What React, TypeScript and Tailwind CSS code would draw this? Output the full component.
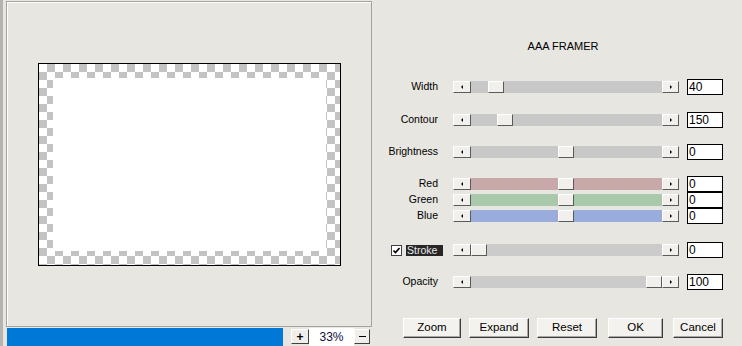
import React from 'react'

const raised =
  'border border-t-white border-l-white border-r-[#5a5a5a] border-b-[#5a5a5a] bg-[#f1f0ec]'

function ArrowButton({ dir }: { dir: 'left' | 'right' }) {
  return (
    <div className={`${raised} h-full flex items-center justify-center shrink-0 ${dir === 'left' ? 'w-[18px]' : 'w-[17px]'}`}>
      {dir === 'left' ? (
        <div className="w-0 h-0 border-y-[2px] border-y-transparent border-r-[2px] border-r-black" />
      ) : (
        <div className="w-0 h-0 border-y-[2px] border-y-transparent border-l-[2px] border-l-black" />
      )}
    </div>
  )
}

function Slider({ pos, track }: { pos: number; track: string }) {
  return (
    <div className="flex w-[226px] h-[12px] shrink-0">
      <ArrowButton dir="left" />
      <div className={`relative flex-1 h-full ${track}`}>
        <div className={`absolute top-0 h-full w-[16px] ${raised}`} style={{ left: pos }} />
      </div>
      <ArrowButton dir="right" />
    </div>
  )
}

function ValueBox({ value }: { value: string }) {
  return (
    <div className="ml-[8px] w-[36px] h-[16px] bg-white border border-black text-[12px] leading-[14px] pl-[1px] text-black shrink-0">
      {value}
    </div>
  )
}

function Row({ label, pos, value, track = 'bg-[#c8c8c8]', className = '' }: { label: string; pos: number; value: string; track?: string; className?: string }) {
  return (
    <div className={`flex items-center h-[16px] ${className}`}>
      <div className="w-[58px] text-right text-[10.5px] shrink-0">{label}</div>
      <div className="ml-[15px]">
        <Slider pos={pos} track={track} />
      </div>
      <ValueBox value={value} />
    </div>
  )
}

function Button({ label, w, className = '' }: { label: string; w: string; className?: string }) {
  return (
    <div className={`${w} h-[20px] flex items-center justify-center text-[11.5px] border border-t-white border-l-white border-r-[#3c3c3c] border-b-[#3c3c3c] bg-[#f3f2ee] shadow-[inset_-1px_-1px_0_#a8a8a8] ${className}`}>
      {label}
    </div>
  )
}

export default function App() {
  return (
    <div className="w-[742px] h-[346px] bg-[#e7e6e0] flex overflow-hidden text-[11px] text-black font-['Liberation_Sans',Arial,sans-serif]">
      {/* left edge */}
      <div className="w-[3px] h-full bg-[#b4b4b0] shrink-0" />

      {/* preview column */}
      <div className="ml-[3px] w-[366px] flex flex-col shrink-0">
        <div className="mt-[1px] h-[326px] border border-[#a3a3a0] shadow-[inset_1px_1px_0_#fff] flex items-center justify-center">
          <div className="w-[303px] h-[203px] border border-black p-[14px] bg-[conic-gradient(#c3c3c3_25%,#ffffff_0_50%,#c3c3c3_0_75%,#ffffff_0)] bg-[length:16px_16px]">
            <div className="w-full h-full bg-white" />
          </div>
        </div>
        <div className="mt-[1px] h-[18px] flex">
          <div className="ml-[1px] w-[276px] h-full bg-[#0078d7]" />
          <div className="ml-[8px] mt-[1px] w-[18px] h-[15px] border border-t-white border-l-white border-r-[#404040] border-b-[#404040] bg-[#efeeea] flex items-center justify-center font-bold text-[12px] leading-none">
            +
          </div>
          <div className="w-[45px] h-full bg-white flex items-center justify-center text-[12px] text-[#10103a]">33%</div>
          <div className="mt-[1px] w-[16px] h-[15px] border border-t-white border-l-white border-r-[#404040] border-b-[#404040] bg-[#efeeea] flex items-center justify-center">
            <div className="w-[7px] h-[1px] bg-black" />
          </div>
        </div>
      </div>

      {/* controls column */}
      <div className="pl-[8px] pt-[40px] flex flex-col">
        <div className="w-[366px] text-center leading-[13px] h-[13px]">AAA FRAMER</div>

        <Row label="Width" pos={17} value="40" className="mt-[26px]" />
        <Row label="Contour" pos={26} value="150" className="mt-[17px]" />
        <Row label="Brightness" pos={87} value="0" className="mt-[16px]" />
        <Row label="Red" pos={87} value="0" track="bg-[#c8a8a8]" className="mt-[16px]" />
        <Row label="Green" pos={87} value="0" track="bg-[#a9c9aa]" />
        <Row label="Blue" pos={87} value="0" track="bg-[#99acdc]" />

        {/* stroke */}
        <div className="flex items-center h-[16px] mt-[18px]">
          <div className="ml-[11px] w-[11px] h-[11px] bg-white border border-[#404040] flex items-center justify-center shrink-0">
            <svg width="7" height="7" viewBox="0 0 7 7">
              <path d="M0.5 3.5 L2.5 5.5 L6.5 1" stroke="black" strokeWidth="1.6" fill="none" />
            </svg>
          </div>
          <div className="ml-[4px] w-[37px] h-[11px] bg-[#262626] text-[#e8e8e8] text-[10.5px] leading-[11px] pl-[1px] shrink-0">Stroke</div>
          <div className="ml-[10px]">
            <Slider pos={0} track="bg-[#cbcbcb]" />
          </div>
          <ValueBox value="0" />
        </div>

        <Row label="Opacity" pos={175} value="100" track="bg-[#cbcbcb]" className="mt-[16px]" />

        <div className="flex mt-[28px] ml-[23px]">
          <Button label="Zoom" w="w-[58px]" />
          <Button label="Expand" w="w-[60px]" className="ml-[8px]" />
          <Button label="Reset" w="w-[60px]" className="ml-[8px]" />
          <Button label="OK" w="w-[55px]" className="ml-[11px]" />
          <Button label="Cancel" w="w-[50px]" className="ml-[10px]" />
        </div>
      </div>
    </div>
  )
}
